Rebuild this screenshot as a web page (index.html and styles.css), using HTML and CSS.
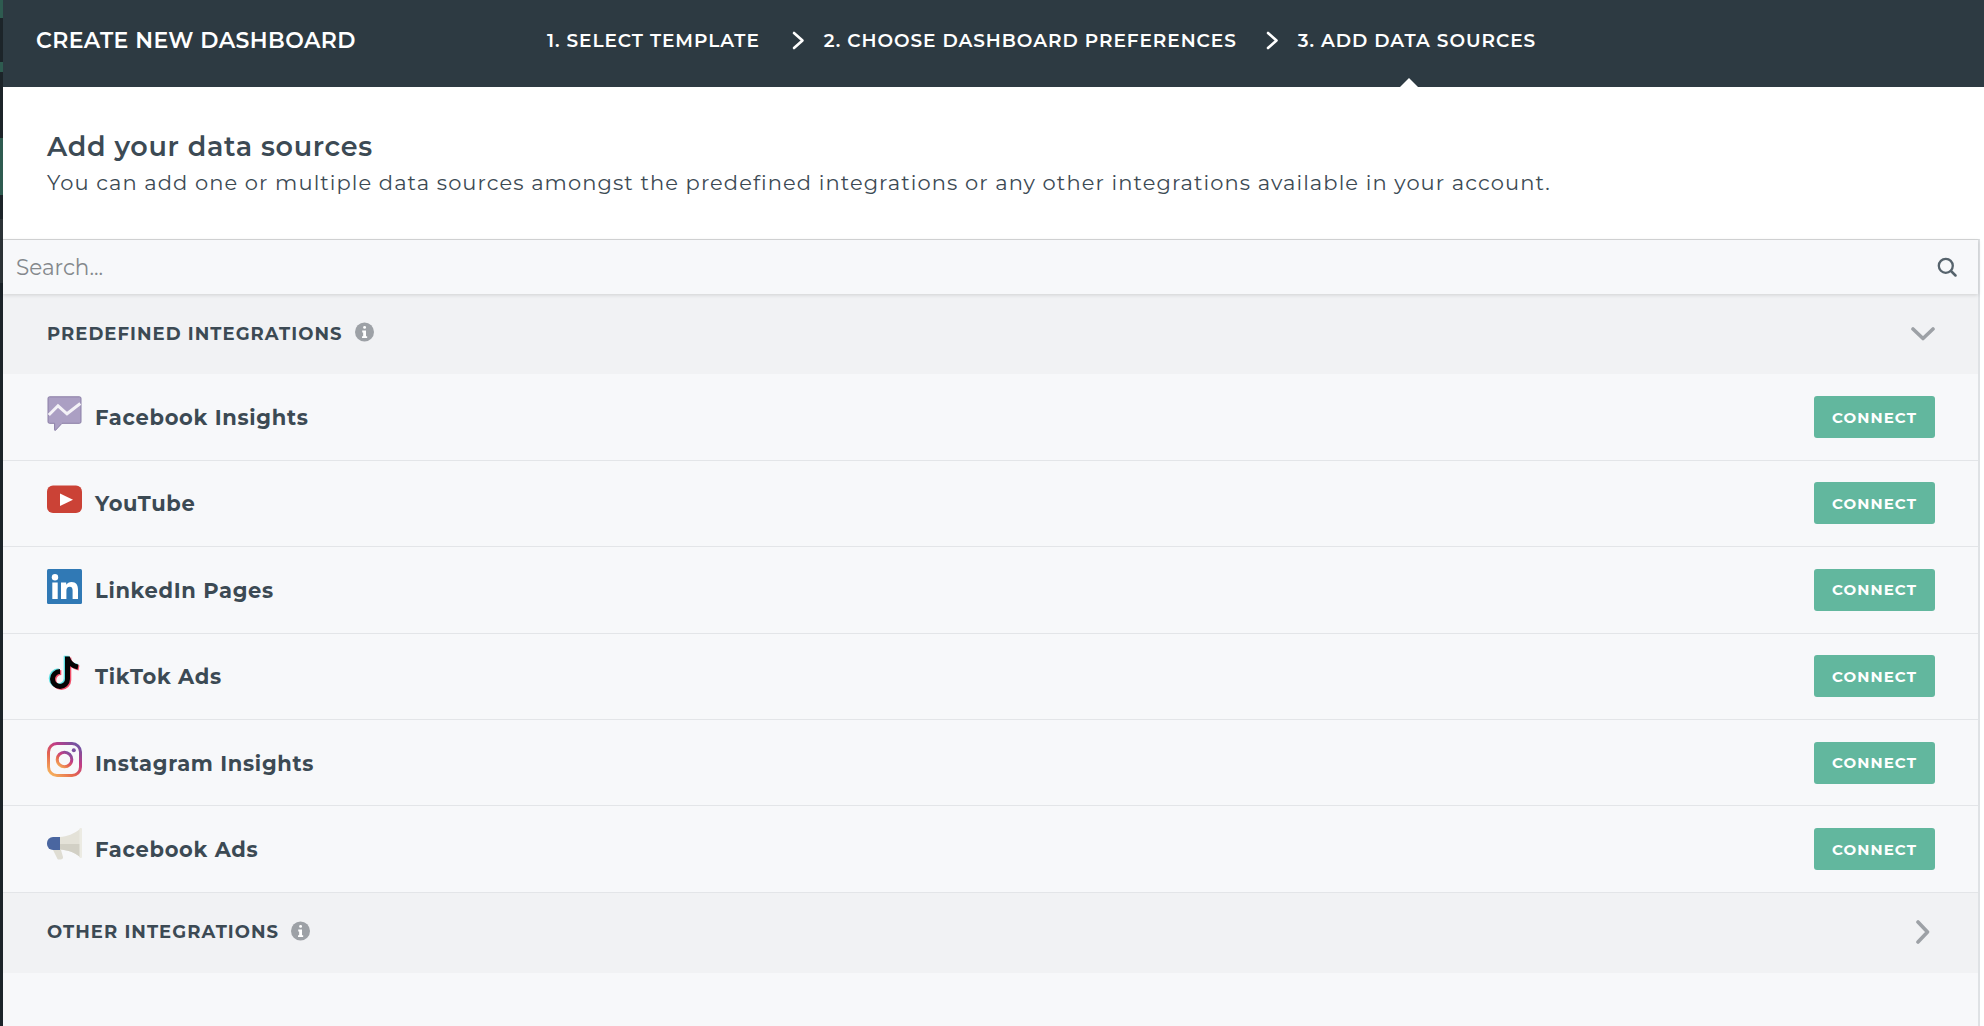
FILE: index.html
```html
<!DOCTYPE html>
<html lang="en">
<head>
<meta charset="utf-8">
<title>Create new dashboard</title>
<link rel="stylesheet" href="styles.css">
</head>
<body>
<div class="stripe">
  <i class="s-green s1"></i><i class="s-dark s2"></i><i class="s-green s3"></i><i class="s-dark s4"></i><i class="s-green s5"></i><i class="s-dark s6"></i><i class="s-grey s7"></i><i class="s-dark s8"></i>
</div>
<main class="panel">
  <header class="topbar">
    <div class="brand">CREATE NEW DASHBOARD</div>
    <nav class="steps">
      <span class="step">1. SELECT TEMPLATE</span>
      <svg class="step-arrow step-arrow-first" viewBox="0 0 13 19"><path d="M2 2l8.500 7.500L2 17" fill="none" stroke="#fff" stroke-width="2.600" stroke-linecap="round" stroke-linejoin="round"/></svg>
      <span class="step">2. CHOOSE DASHBOARD PREFERENCES</span>
      <svg class="step-arrow" viewBox="0 0 13 19"><path d="M2 2l8.500 7.500L2 17" fill="none" stroke="#fff" stroke-width="2.600" stroke-linecap="round" stroke-linejoin="round"/></svg>
      <span class="step step-current">3. ADD DATA SOURCES</span>
    </nav>
  </header>
  <section class="intro">
    <h1>Add your data sources</h1>
    <p>You can add one or multiple data sources amongst the predefined integrations or any other integrations available in your account.</p>
  </section>
  <div class="list">
    <div class="search">
      <span class="placeholder">Search...</span>
      <svg class="search-icon" viewBox="0 0 20 20"><circle cx="8.800" cy="8.800" r="7" fill="none" stroke="#56636c" stroke-width="2.300"/><path d="M14 14l4.500 4.500" stroke="#56636c" stroke-width="2.500" stroke-linecap="round"/></svg>
    </div>
    <div class="group group-first">
      <span class="group-title">PREDEFINED INTEGRATIONS</span>
      <svg class="info" viewBox="0 0 20 20"><circle cx="10" cy="10" r="10" fill="#9da1a6"/><rect x="8.600" y="3.600" width="3" height="3" rx="1.400" fill="#fff"/><path d="M7.600 8.400h4v6h1.200v2H7.400v-2h1.200v-4h-1z" fill="#fff"/></svg>
      <svg class="chev-down" viewBox="0 0 24 14"><path d="M2 2l10 9.500L22 2" fill="none" stroke="#9da1a6" stroke-width="3.600" stroke-linecap="round" stroke-linejoin="round"/></svg>
    </div>

    <div class="row">
      <svg class="logo" viewBox="0 0 35 35"><path d="M2.500 .8h30a1.500 1.500 0 0 1 1.500 1.500v23.500a1.500 1.500 0 0 1-1.500 1.500H15l-6.500 7c-.4.300-.9.100-.9-.4V27.300H2.500A1.500 1.500 0 0 1 1 25.800V2.300A1.500 1.500 0 0 1 2.500 .8z" fill="#ab9fc3" stroke="#8a7ea6"/><path d="M1.800 19L11 9.800l9 8L33.300 7.500" fill="none" stroke="#f4f2f7" stroke-width="3"/></svg>
      <span class="name">Facebook Insights</span>
      <button class="connect">CONNECT</button>
    </div>
    <div class="row">
      <svg class="logo" viewBox="0 0 35 28"><rect x="0" y="0" width="35" height="27.500" rx="6" fill="#cb4236"/><path d="M13 8l13 6.200L13 20.500z" fill="#fff"/></svg>
      <span class="name">YouTube</span>
      <button class="connect">CONNECT</button>
    </div>
    <div class="row">
      <svg class="logo" viewBox="0 0 35 35"><rect width="35" height="35" rx="1.500" fill="#3079b5"/><circle cx="8" cy="8.300" r="3.200" fill="#fff"/><rect x="5.300" y="13.500" width="5.400" height="16.500" fill="#fff"/><path d="M14 13.500h5.200v2.300c1-1.700 3-2.800 5.300-2.800 4.700 0 6.500 3 6.500 7.500V30h-5.400v-8.400c0-2.300-.7-3.900-2.800-3.900-2.300 0-3.400 1.600-3.400 3.900V30H14z" fill="#fff"/></svg>
      <span class="name">LinkedIn Pages</span>
      <button class="connect">CONNECT</button>
    </div>
    <div class="row">
      <svg class="logo" viewBox="0 0 35 35">
        <path d="M20.500 1.500V24A7.500 7.500 0 1 1 13 16.500" transform="translate(-1.300 -.800)" fill="none" stroke="#5fe0e3" stroke-width="5"/>
        <path d="M20.500 3c1.500 4.500 5 8 10.500 9" transform="translate(-1 -.800)" fill="none" stroke="#5fe0e3" stroke-width="5"/>
        <path d="M20.500 1.500V24A7.500 7.500 0 1 1 13 16.500" transform="translate(1.300 1)" fill="none" stroke="#f0506a" stroke-width="5"/>
        <path d="M20.500 3c1.500 4.500 5 8 10.500 9" transform="translate(1 1)" fill="none" stroke="#f0506a" stroke-width="5"/>
        <path d="M20.500 1.500V24A7.500 7.500 0 1 1 13 16.500" fill="none" stroke="#050505" stroke-width="5"/>
        <path d="M20.500 3c1.500 4.500 5 8 10.500 9" fill="none" stroke="#050505" stroke-width="5"/>
      </svg>
      <span class="name">TikTok Ads</span>
      <button class="connect">CONNECT</button>
    </div>
    <div class="row">
      <svg class="logo" viewBox="0 0 35 35">
        <defs><linearGradient id="ig" x1="0.100" y1="1" x2="0.900" y2="0"><stop offset="0" stop-color="#f6b25c"/><stop offset=".35" stop-color="#e5664e"/><stop offset=".65" stop-color="#c13c86"/><stop offset="1" stop-color="#6d55a4"/></linearGradient></defs>
        <rect x="1.500" y="1.500" width="32" height="32" rx="8.500" fill="none" stroke="url(#ig)" stroke-width="3"/>
        <circle cx="17.500" cy="17.500" r="7.300" fill="none" stroke="url(#ig)" stroke-width="3"/>
        <circle cx="26.800" cy="8.200" r="2" fill="#7b4fa0"/>
      </svg>
      <span class="name">Instagram Insights</span>
      <button class="connect">CONNECT</button>
    </div>
    <div class="row">
      <svg class="logo" viewBox="0 0 35 35">
        <path d="M6 22h8l2 7c.3 1.500-.8 2.500-2.500 2.500h-1.500c-1 0-1.700-.5-2-1.500z" fill="#dfddd3"/>
        <path d="M13 9c7-.5 14-3 20-8v28c-6-5-13-7-20-7.500z" fill="#e4e2d8"/>
        <path d="M13 16h20v13c-6-5-13-7-20-7.500z" fill="#d2d0c5"/>
        <rect x="32.500" y="0" width="2.500" height="30" rx="1" fill="#ecebe3"/>
        <path d="M6 9h7v13H6a6 6 0 0 1-6-6v-1a6 6 0 0 1 6-6z" fill="#4a66a0"/>
      </svg>
      <span class="name">Facebook Ads</span>
      <button class="connect">CONNECT</button>
    </div>

    <div class="group group-last">
      <span class="group-title">OTHER INTEGRATIONS</span>
      <svg class="info" viewBox="0 0 20 20"><circle cx="10" cy="10" r="10" fill="#9da1a6"/><rect x="8.600" y="3.600" width="3" height="3" rx="1.400" fill="#fff"/><path d="M7.600 8.400h4v6h1.200v2H7.400v-2h1.200v-4h-1z" fill="#fff"/></svg>
      <svg class="chev-right" viewBox="0 0 14 24"><path d="M2 2l9.500 10L2 22" fill="none" stroke="#9da1a6" stroke-width="3.600" stroke-linecap="round" stroke-linejoin="round"/></svg>
    </div>
  </div>
</main>
</body>
</html>
```
FILE: styles.css
```css
* { box-sizing: border-box; }
html, body { margin: 0; height: 100%; }
body {
  display: flex;
  width: 1984px;
  height: 1026px;
  overflow: hidden;
  background: #fff;
  font-family: "Montserrat", "Lato", "Liberation Sans", sans-serif;
  color: #3c4a54;
}
.stripe {
  width: 3px;
  flex: none;
  display: flex;
  flex-direction: column;
  background: #1c2429;
}
.stripe i { display: block; }
.s-green { background: #2e5b50; }
.s-dark { background: #1c2429; }
.s-grey { background: #2d3438; }
.s1 { height: 18px; }
.s2 { height: 44px; }
.s3 { height: 10px; }
.s4 { height: 66px; }
.s5 { height: 57px; }
.s6 { height: 24px; }
.s7 { height: 64px; }
.s8 { flex: 1; }
.panel {
  flex: 1;
  min-width: 0;
  display: flex;
  flex-direction: column;
}
.topbar {
  height: 87px;
  flex: none;
  background: #2d3a42;
  color: #fff;
  display: flex;
  align-items: center;
  padding-left: 33px;
  padding-bottom: 7px;
}
.brand {
  width: 511px;
  font-size: 22px;
  font-weight: 600;
  letter-spacing: .4px;
  white-space: nowrap;
}
.steps {
  display: flex;
  align-items: center;
  font-size: 18.5px;
  font-weight: 600;
  letter-spacing: .95px;
  white-space: nowrap;
}
.step { display: block; }
.step-arrow { width: 13px; height: 19px; margin: 0 19px 0 29px; flex: none; }
.step-arrow-first { margin-left: 32px; }
.step-current { position: relative; }
.step-current::after {
  content: "";
  position: absolute;
  left: 98px;
  top: 49px;
  border-left: 13px solid transparent;
  border-right: 13px solid transparent;
  border-bottom: 13px solid #fff;
}
.intro {
  height: 152px;
  flex: none;
  padding: 43px 0 0 44px;
}
.intro h1 {
  margin: 0;
  font-size: 27px;
  line-height: 34px;
  font-weight: 600;
  letter-spacing: .7px;
  color: #3c4a54;
}
.intro p {
  margin: 4px 0 0;
  font-size: 21px;
  line-height: 30px;
  letter-spacing: 1.07px;
  color: #3c4a54;
}
.list {
  flex: 1;
  width: 1977px;
  display: flex;
  flex-direction: column;
  background: #f7f8fa;
  border-top: 1px solid #d6d7d8;
  border-right: 2px solid #dfe2e5;
}
.search {
  height: 54px;
  flex: none;
  display: flex;
  align-items: center;
  justify-content: space-between;
  padding: 0 21px 0 13px;
  position: relative;
  box-shadow: 0 1px 4px rgba(0,0,0,.14);
}
.placeholder { font-size: 21.5px; color: #84888c; }
.search-icon { width: 20px; height: 20px; }
.group {
  flex: none;
  display: flex;
  align-items: center;
  padding: 0 43px 1px 44px;
  background: #f1f2f4;
}
.group-first { height: 80.4px; }
.group-last { height: 80px; }
.group-title {
  font-size: 18px;
  font-weight: 700;
  letter-spacing: 1.05px;
  color: #3c4a54;
}
.info { width: 19px; height: 20px; margin: 0 0 3px 12px; flex: none; }
.chev-down { width: 24px; height: 14px; margin-left: auto; }
.chev-right { width: 14px; height: 24px; margin-left: auto; margin-right: 5px; }
.row {
  height: 86.4px;
  flex: none;
  display: flex;
  align-items: center;
  padding: 0 43px 0 44px;
  border-bottom: 1px solid #e3e5e8;
}
.logo { width: 35px; height: 35px; flex: none; margin-top: -7px; }
.name {
  margin: 1px 0 0 13px;
  font-size: 21px;
  font-weight: 700;
  letter-spacing: .7px;
  color: #3c4a54;
}
.connect {
  margin-left: auto;
  width: 121px;
  height: 42px;
  padding: 0;
  border: 0;
  border-radius: 3px;
  background: #62b79e;
  color: #fff;
  font: 700 15px "Montserrat", "Lato", "Liberation Sans", sans-serif;
  letter-spacing: 1.1px;
}
```
